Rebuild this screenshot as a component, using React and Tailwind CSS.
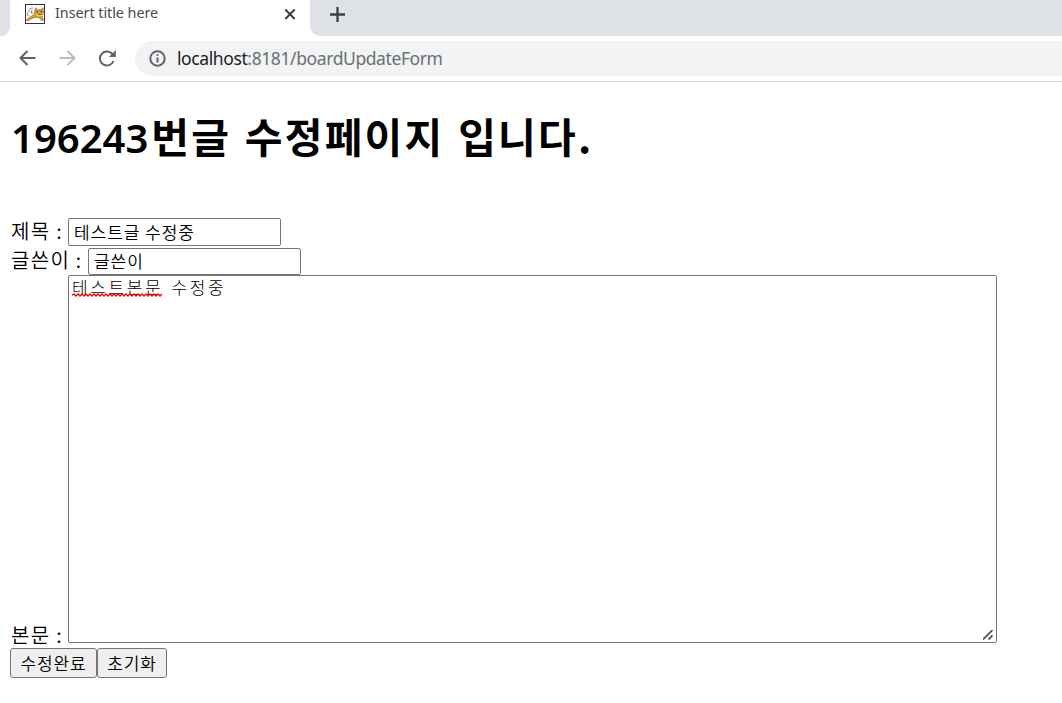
import React from "react";

const korean = "font-['Noto_Sans_CJK_KR',sans-serif]";
const inputClass = "w-[213px] border border-[#767676] rounded-[2px] bg-white pl-[5px] pb-[2px] text-[17px] font-[350] tracking-[0.95px] outline-none";
const buttonClass = "h-[30px] border border-[#767676] rounded-[3px] bg-[#efefef] text-[17px] font-[350] leading-[28px] tracking-[0.9px] whitespace-nowrap";
const labelClass = "pl-px text-[20px] font-[350] tracking-[1.3px] whitespace-nowrap";

function CatIcon() {
  return (
    <svg className="w-5 h-5" viewBox="0 0 20 20">
      <rect x="0.5" y="0.5" width="19" height="19" fill="#fff" stroke="#333" />
      <path d="M8 4C5 4 3 6 4 8M3 8C2 10 2 12 4 12M7 6L6 9H8" fill="none" stroke="#777" strokeWidth="0.9" />
      <path d="M1 16L5 13L9 10.500L10.500 3.500L12.500 5.500H16L18 3.500L18.500 9L17 11.500L18.500 16L17 17L14 13.500L9 13.500L3 17Z" fill="#d49a32" stroke="#94702f" strokeWidth="0.6" />
      <path d="M11.500 7.500H13M15.500 7.500H17M13.500 10L14.500 11L15.500 10" fill="none" stroke="#49351b" strokeWidth="0.9" />
      <path d="M11 10L13 12L16.500 11.500" fill="none" stroke="#f6e4b4" strokeWidth="0.9" />
    </svg>
  );
}

function TabStrip() {
  return (
    <div className="flex h-9 bg-[#dee1e6]">
      <div className="w-[10px] bg-white">
        <div className="h-9 bg-[#dee1e6] rounded-br-[9px]"></div>
      </div>
      <div className="w-[300px] bg-white flex items-start pl-[15px] pt-1">
        <CatIcon />
        <span className="ml-[10px] w-[218px] shrink-0 -mt-[2px] text-[14.4px] leading-[22px] tracking-[-0.06px] text-[#45494d] font-['Noto_Sans',sans-serif] whitespace-nowrap">Insert title here</span>
        <svg className="w-[22px] h-5 shrink-0 ml-[5px]" viewBox="0 0 22 20" fill="none" stroke="#3c4043" strokeWidth="2">
          <path d="M7.300 5.500L16.700 15M16.700 5.500L7.300 15" />
        </svg>
      </div>
      <div className="flex-1 bg-white">
        <div className="h-9 bg-[#dee1e6] rounded-bl-[10px] pl-5 pt-[7px]">
          <svg className="w-[15px] h-[15px]" viewBox="0 0 15 15" stroke="#3c4043" strokeWidth="2.300">
            <path d="M0 7.500H15M7.500 0V15" />
          </svg>
        </div>
      </div>
    </div>
  );
}

function Toolbar() {
  return (
    <div className="h-[46px] bg-white border-b border-[#d9dbde] flex pt-[5px]">
      <div className="w-[135px] flex pl-[19px] pt-[9px]">
        <svg className="w-[17px] h-4" viewBox="0 0 17 16" fill="none" stroke="#5f6368" strokeWidth="2">
          <path d="M16.500 8H1.500M8.500 1L1.500 8L8.500 15" />
        </svg>
        <svg className="w-[17px] h-4 ml-[23px]" viewBox="0 0 17 16" fill="none" stroke="#babcbe" strokeWidth="2">
          <path d="M0.500 8H15.500M8.500 1L15.500 8L8.500 15" />
        </svg>
        <svg className="w-[18px] h-[17px] ml-[22px]" viewBox="0 0 18 17" fill="none" stroke="#5f6368" strokeWidth="2">
          <path d="M14.700 4.500A7 7 0 1 0 15.500 11" />
          <path d="M17.800 0V7H10.800Z" fill="#5f6368" stroke="none" />
        </svg>
      </div>
      <div className="flex-1 h-[35px] bg-[#f1f3f4] rounded-l-full flex items-center pl-[14px]">
        <svg className="w-[17px] h-[17px]" viewBox="0 0 17 17" fill="none" stroke="#5f6368" strokeWidth="2">
          <circle cx="8.500" cy="8.500" r="7.200" />
          <path d="M8.500 7.500V12.500M8.500 4.300V6" />
        </svg>
        <span className="ml-[11px] pb-px text-[17.5px] leading-6 tracking-[-0.4px] text-[#6b6f73] font-['Noto_Sans',sans-serif] whitespace-nowrap"><span className="text-[#202124]">localhost</span>:8181/boardUpdateForm</span>
      </div>
    </div>
  );
}

export default function App() {
  return (
    <div className={`w-[1062px] h-[703px] overflow-hidden bg-white text-black ${korean}`}>
      <TabStrip />
      <Toolbar />

      <h1 className="h-[136px] pl-[11px] pt-[24px] text-[41px] leading-[58px] font-bold whitespace-nowrap">
        <span className="mr-[3px] text-[40px] font-semibold font-['Noto_Sans',sans-serif]">196243</span>
        <span className="tracking-[2.2px] [word-spacing:2.200px]">번글 수정페이지 입니다.</span>
      </h1>

      <form className="pl-[10px]" onSubmit={(e) => e.preventDefault()}>
        {/* Title */}
        <div className="flex h-[30px]">
          <label className={`${labelClass} w-[58px] leading-[26px]`}>제목 :</label>
          <input type="text" className={`${inputClass} h-[28px]`} defaultValue="테스트글 수정중" />
        </div>
        {/* Writer */}
        <div className="flex h-[27px]">
          <label className={`${labelClass} w-[78px] leading-[24px]`}>글쓴이 :</label>
          <input type="text" className={`${inputClass} h-[27px]`} defaultValue="글쓴이" />
        </div>
        {/* Content */}
        <div className="flex h-[373px]">
          <label className={`${labelClass} w-[58px] pt-[347px] leading-[26px]`}>본문 :</label>
          <div className="relative w-[929px] h-[368px] border border-[#767676] rounded-[2px] pl-[3px] text-[17px] leading-[22px] tracking-[2.6px] font-light whitespace-pre">
            테스트본문<span className="ml-[2px]"> 수정중</span>
            <svg className="absolute left-[3px] top-[17px] w-[91px] h-1" viewBox="0 0 91 4" fill="none" stroke="#f00" strokeWidth="1.400">
              <path d="M0 2L2 1L4 3L6 1L8 3L10 1L12 3L14 1L16 3L18 1L20 3L22 1L24 3L26 1L28 3L30 1L32 3L34 1L36 3L38 1L40 3L42 1L44 3L46 1L48 3L50 1L52 3L54 1L56 3L58 1L60 3L62 1L64 3L66 1L68 3L70 1L72 3L74 1L76 3L78 1L80 3L82 1L84 3L86 1L88 3L90 1" />
            </svg>
            <svg className="absolute right-[3px] bottom-[2px] w-[10px] h-[10px]" viewBox="0 0 10 10" stroke="#555" strokeWidth="1.800">
              <path d="M0 9.500L9.500 0M5.500 9.500L9.500 5.500" />
            </svg>
          </div>
        </div>
        <div className="flex">
          <button type="submit" className={`${buttonClass} w-[87px]`}>수정완료</button>
          <button type="reset" className={`${buttonClass} w-[70px]`}>초기화</button>
        </div>
      </form>
    </div>
  );
}
